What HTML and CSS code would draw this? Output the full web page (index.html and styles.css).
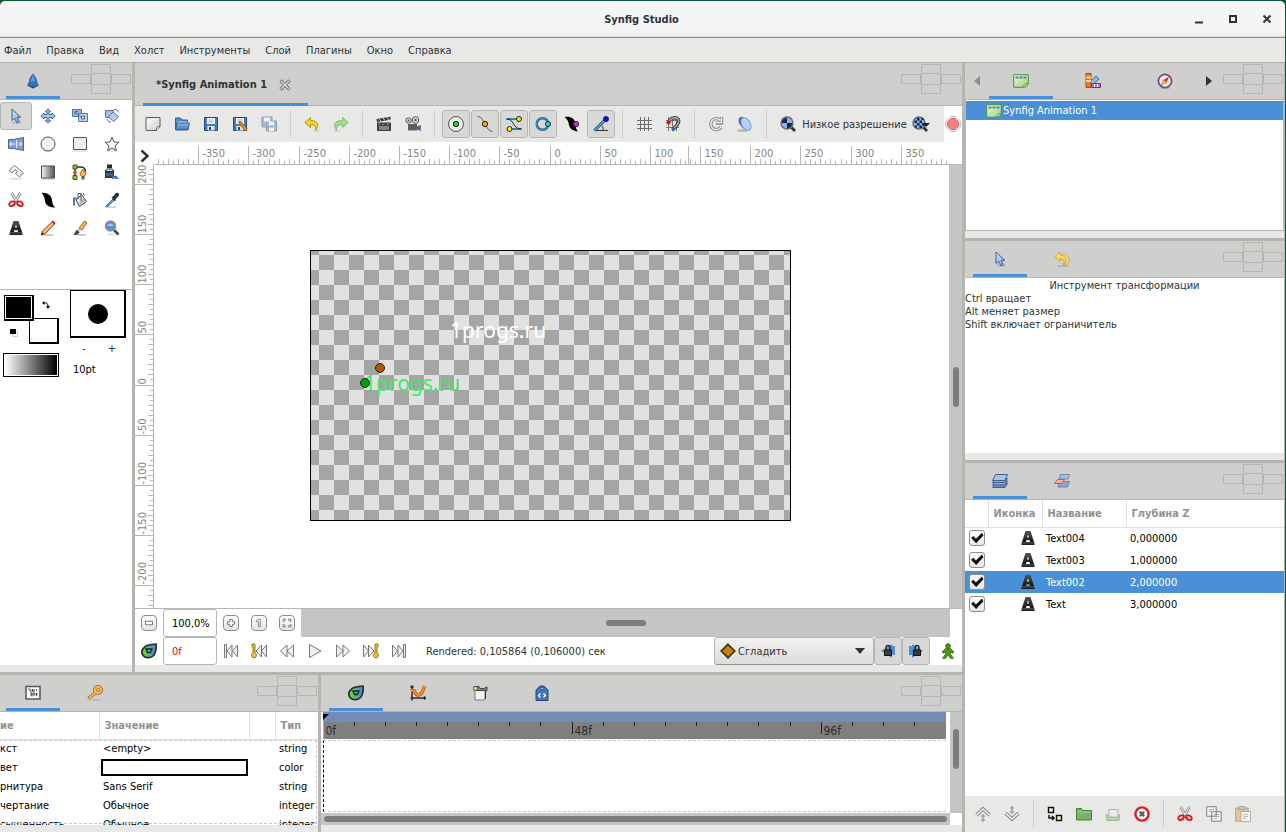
FILE: index.html
```html
<!DOCTYPE html>
<html lang="ru">
<head>
<meta charset="utf-8">
<title>Synfig Studio</title>
<link rel="stylesheet" href="styles.css">
</head>
<body>
<svg class="sprite" aria-hidden="true">
  <defs>
    <linearGradient id="gBlue" x1="0" y1="0" x2="1" y2="1"><stop offset="0" stop-color="#dbe8f8"/><stop offset="1" stop-color="#7d9dcf"/></linearGradient>
    <linearGradient id="gDark" x1="0" y1="0" x2="0" y2="1"><stop offset="0" stop-color="#555"/><stop offset="1" stop-color="#151515"/></linearGradient>
    <linearGradient id="gFade" x1="0" y1="0" x2="1" y2="0"><stop offset="0" stop-color="#f4f4f4"/><stop offset="1" stop-color="#555"/></linearGradient>
    <linearGradient id="gGreen" x1="0" y1="0" x2="1" y2="1"><stop offset="0" stop-color="#e9f8dc"/><stop offset="1" stop-color="#9bd07c"/></linearGradient>
    <linearGradient id="gKite" x1="0" y1="0" x2="1" y2="0"><stop offset="0.2" stop-color="#6fcf3a"/><stop offset="0.9" stop-color="#4d86e0"/></linearGradient>
    <linearGradient id="gPaper" x1="0" y1="0" x2="1" y2="1"><stop offset="0" stop-color="#fff"/><stop offset="1" stop-color="#ccc"/></linearGradient>
    <linearGradient id="gFolder" x1="0" y1="0" x2="0" y2="1"><stop offset="0" stop-color="#8db8e6"/><stop offset="1" stop-color="#3f78bd"/></linearGradient>
  </defs>
  <symbol id="brand" viewBox="0 0 16 16"><path d="M8 .5C10.500 3 12 6 12.300 9L14 13l-3 1-3 1.500L5 14l-3-1 1.700-4C4 6 5.500 3 8 .5z" fill="#4a6580"/><path d="M8 1.500C10 4 11 6.500 11.300 9.500L10 13l-2 1.500L6 13 4.700 9.500C5 6.500 6 4 8 1.500z" fill="#2478cc"/><path d="M8 2c-1.500 3-2 5-2 7l2-1.500L10 9c0-2-.5-4-2-7z" fill="#56a4ee"/><path d="M4.500 13 8 15.500 11.500 13 8 14z" fill="#153c63"/></symbol>
  <symbol id="arrow" viewBox="0 0 16 16"><ellipse cx="9" cy="14.500" rx="5" ry="1.200" fill="#0002"/><path d="M4 1v11.500l2.800-2.300 2 4.600 2.400-1-2-4.500h3.600z" fill="url(#gBlue)" stroke="#3b5f9e"/></symbol>
  <symbol id="move" viewBox="0 0 16 16"><path d="m8 .8 2.700 3H9v2.700h3V5l3.200 3L12 11V9.500H9v3h1.700L8 15.300l-2.700-2.800H7v-3H4V11L.8 8 4 5v1.500h3V3.800H5.300z" fill="#a9c2e6" stroke="#4568a3"/></symbol>
  <symbol id="scale" viewBox="0 0 16 16"><path d="M.5 1.500h9v7h-9z" fill="#9bb5dc" stroke="#5475ab"/><path d="M6.500 5.500h9v8h-9z" fill="#bfd0ea" stroke="#5475ab"/><path d="m3 4 6 5M3 3.500h3M3 3.500v3" fill="none" stroke="#4467a1"/><path d="M9.500 8h3v3h-3z" fill="#d9e4f4" stroke="#4467a1"/></symbol>
  <symbol id="rotate" viewBox="0 0 16 16"><path d="M1.500 2.500h8l-2 7h-6z" fill="#a8bee1" stroke="#5878ac"/><path d="m9 4 5.500 4.500L10 13.500 4.500 9z" fill="#bccde8" stroke="#5878ac"/><path d="M10 1.500c2.500 0 4 1 4.500 3M3 11c.5 2 2 3 4 3" fill="none" stroke="#3f629c"/></symbol>
  <symbol id="mirror" viewBox="0 0 16 16"><path d="M.5 3.500h5l10-2v13l-10-2h-5z" fill="#7e9fd0" stroke="#41659f"/><path d="M8.500 4v8M1.500 8H7m3 0h4M3.500 6 1.500 8l2 2M12 6l2 2-2 2" fill="none" stroke="#e9f0fb"/></symbol>
  <symbol id="circle" viewBox="0 0 16 16"><ellipse cx="8" cy="14.800" rx="5" ry="1" fill="#0002"/><circle cx="8" cy="8" r="7" fill="#f1f1ef" stroke="#555"/></symbol>
  <symbol id="rect" viewBox="0 0 16 16"><path d="M2 15h13" stroke="#0003"/><path d="M1.500 1.500h13v12h-13z" fill="#eeeeec" stroke="#555"/></symbol>
  <symbol id="star" viewBox="0 0 16 16"><ellipse cx="8" cy="14.800" rx="5" ry="1" fill="#0002"/><path d="m8 1.300 2 4.600 5 .5-3.800 3.300 1.200 5L8 12l-4.400 2.700 1.200-5L1 6.400l5-.5z" fill="#f3f3f1" stroke="#555"/></symbol>
  <symbol id="poly" viewBox="0 0 16 16"><ellipse cx="8" cy="14.800" rx="6" ry="1" fill="#0002"/><path d="m1 6.500 5.500-5 9 7.500-4 4L7.500 9.500l2-2L7 5.500l-3 3.500z" fill="#f3f3f1" stroke="#777"/></symbol>
  <symbol id="grad" viewBox="0 0 16 16"><path d="M1.500 2h13v12h-13z" fill="url(#gFade)" stroke="#4c4c4c"/><path d="M2 15.200h13" stroke="#0003"/></symbol>
  <symbol id="spline" viewBox="0 0 16 16"><path d="M3 14V5M3 3h6c3 0 5 2 4 5" fill="none" stroke="#2b2b2b" stroke-width="1.500"/><path d="M1 1h4v4H1zM1 11.500h4v4H1z" fill="#86c232" stroke="#3c6112"/><circle cx="3" cy="8.500" r="2" fill="#e04a2c"/><path d="m11 5 3 4.500-1.500 3h-3L8 9.500z" fill="#f5c04a" stroke="#9a6c14"/><path d="M9.500 12.500h3v3h-3z" fill="#3465a4"/></symbol>
  <symbol id="ink" viewBox="0 0 16 16"><path d="M3 .5h5V4H3zM1 6.500 3 4.500h5l2 2v7.500H1z" fill="#262a30"/><path d="M1.500 8.500h8v4h-8z" fill="#3a5c92"/><path d="M2.500 5.500h6V7h-6z" fill="#ddd"/><path d="M7.500 13c2-2 3.500-.5 5-1.500l1 2 2 1-2.500.5-2.500-.5-2 .8z" fill="#3b78c4"/></symbol>
  <symbol id="scissors" viewBox="0 0 16 16"><path d="M3.500 1 9 10M12.500 1 7 10" stroke="#888" stroke-width="2.800"/><path d="M3.500 1 9 10M12.500 1 7 10" stroke="#e4e4e4" stroke-width="1.300"/><path d="M7.500 10.500C5 8.500 1.500 9.500 1.200 12c0 3 4.800 3 6-1.500M8.500 10.500c2.500-2 6-1 6.300 1.500 0 3-4.800 3-6-1.500" fill="none" stroke="#d61414" stroke-width="1.900"/></symbol>
  <symbol id="width" viewBox="0 0 16 16"><path d="M1.500 1c5-1 10 2 10.500 7 0 3 1 5 3 7.500C9 15.500 5.500 13 5 9 4.500 6 4 3 1.500 1z" fill="#000"/></symbol>
  <symbol id="fill" viewBox="0 0 16 16"><path d="m4 8 5.500-5.500 5 7-7 5z" fill="#e7e7e5" stroke="#444"/><path d="M6 7V1.500h3V9M11 1l1.500 2.500" fill="none" stroke="#555"/><path d="M1 5.500h4.500L3 8v5.500H1z" fill="#4d79b5"/><path d="m7 11 5-5 1.500 2.500-5.500 4z" fill="#aaa"/></symbol>
  <symbol id="eyedrop" viewBox="0 0 16 16"><path d="M3 15.200h9" stroke="#0003" stroke-width="1.500"/><path d="m9 7-6 6-1 2 2-.8L10.500 8" fill="#79a9df" stroke="#355f96"/><path d="m8 5 3.500 3.500M9 6l3-4c1-1.500 3 0 2 1.500l-4 4z" fill="#284267" stroke="#222b38" stroke-width="1.500"/></symbol>
  <symbol id="textA" viewBox="0 0 16 16"><path d="M5.500 1h5L14 12H10l-.5-2h-3L6 12H2z" fill="url(#gDark)"/><path d="m8 4.200 1 3.300H7z" fill="#ededed"/><path d="M1.500 12h13v3h-13z" fill="url(#gDark)"/></symbol>
  <symbol id="pencil" viewBox="0 0 16 16"><path d="M4 15h9" stroke="#0003" stroke-width="2"/><path d="M12.500 1.500 2.500 11l-1.300 4 4-1.200L14.500 4z" fill="#eda95b" stroke="#84502b"/><path d="m4 12 9-9" stroke="#ffe2ae"/><path d="m11.500 2 1.500-1.500L15.700 3l-1.500 1.800z" fill="#d62222"/><path d="m1 15.300 1-3 2 2z" fill="#222"/></symbol>
  <symbol id="brush" viewBox="0 0 16 16"><path d="M5 15h9" stroke="#0003" stroke-width="2"/><path d="m7 8 5.500-7 2.500 1.500L10 10z" fill="#edb34f" stroke="#a8752b"/><path d="m6.500 8 3 2.500-2 1.500L5 9.500z" fill="#ccc"/><path d="M1 14.800c2-.5 1.500-3.300 4-5l2.500 2.400c-1 2.300-3 3.300-6.500 2.600z" fill="#404d3e"/></symbol>
  <symbol id="zoomer" viewBox="0 0 16 16"><path d="M4 14.500h9" stroke="#0002" stroke-width="2"/><path d="m10 10 4.500 4.500" stroke="#444" stroke-width="2.500"/><circle cx="6.500" cy="6" r="5" fill="#5d8fcd" stroke="#8a8f95" stroke-width="1.500"/><path d="M3 6c2-3.500 5-3.500 7 0z" fill="#a8cbf1"/></symbol>
  <symbol id="docNew" viewBox="0 0 16 16"><path d="M1 1.500h14V11l-4 3.500H1z" fill="url(#gPaper)" stroke="#5b5b5b"/><path d="M15 10.500c-2 0-3.500 0-3.500 4" fill="#fff" stroke="#5b5b5b"/></symbol>
  <symbol id="folder" viewBox="0 0 16 16"><path d="M1.500 13V2h5l1.500 2h5.500v5" fill="#5389c8" stroke="#2f5f9c"/><path d="M3.500 5.500h10V10h-10z" fill="#c5daf1"/><path d="M1.500 14 3 7h12.500L14 14z" fill="url(#gFolder)" stroke="#2f5f9c"/></symbol>
  <symbol id="save" viewBox="0 0 16 16"><path d="M1.500 1.500h13v13h-13z" fill="#4a7cba" stroke="#24497b"/><path d="M4 2h8v6H4z" fill="#f4f6f9"/><path d="M5.500 4h5M5.500 6h5" stroke="#9db8da"/><path d="M4.500 10h7v4.500h-7z" fill="#dfe6e6"/><path d="M6 11h2v3H6z" fill="#28487a"/></symbol>
  <symbol id="saveAs" viewBox="0 0 16 16"><use href="#save"/><path d="m6.500 6 2-.5 6.500 7-2 2.500z" fill="#f58a1f" stroke="#b4560a"/></symbol>
  <symbol id="saveAll" viewBox="0 0 16 16"><g opacity=".5"><path d="M1 1h10v10H1zM5.500 5h10v10h-10z" fill="#6b93c5" stroke="#31578c"/><path d="M3 1.500h6v4H3zM8 5.500h5v4H8zM8 11.500h5V15H8z" fill="#fff"/></g></symbol>
  <symbol id="undo" viewBox="0 0 16 16"><path d="M10 14.800h5" stroke="#0002" stroke-width="1.500"/><path d="M6.500 1.500.8 6.500l5.700 5V8.700c4-.2 5.500 1 5 5.300C15 11 15.500 4.500 6.500 4.500z" fill="#f3d12f" stroke="#b99508"/></symbol>
  <symbol id="redo" viewBox="0 0 16 16"><path d="M1 14.800h6" stroke="#0002" stroke-width="1.500"/><path d="m9.500 1.500 5.700 5-5.700 5V8.700c-4-.2-6 1-6 5.300C.5 11 0 4.500 9.500 4.500z" fill="#a5d993" stroke="#7fbc68"/></symbol>
  <symbol id="clap" viewBox="0 0 16 16"><path d="M1 6.500h14V15H1zM.5 3 14.500.8v3L1 6z" fill="#3c3f3e"/><path d="m3 3 2 2m2-3 2 2.500m2-3 2 2.500M2.500 9 4 7.500M6.500 9 8 7.500m3 1.500 1.500-1.500M3 11h10M3 13h10" stroke="#c9cbc9"/></symbol>
  <symbol id="camera" viewBox="0 0 16 16"><circle cx="3.500" cy="4.500" r="2.700" fill="#ddd" stroke="#555"/><circle cx="10.500" cy="4" r="3.300" fill="#ddd" stroke="#555"/><circle cx="3.500" cy="4.500" r="1" fill="#555"/><circle cx="10.500" cy="4" r="1.200" fill="#555"/><path d="M3 8h9v6.500H3z" fill="#5d5f5e"/><path d="M12 10.500 15.800 9v6L12 13.500z" fill="#4a6794"/></symbol>
  <symbol id="hPos" viewBox="0 0 16 16"><circle cx="8" cy="8" r="7.400" fill="#fff" stroke="#444"/><circle cx="8" cy="8" r="5" fill="none" stroke="#ddd"/><circle cx="8" cy="8" r="2.700" fill="#18e618" stroke="#111"/></symbol>
  <symbol id="hVert" viewBox="0 0 16 16"><path d="M.5 .5C6 1 6 6 8 8s2 6.500 7.500 7.500" fill="none" stroke="#555"/><circle cx="8" cy="8" r="2.700" fill="#f7a707" stroke="#222"/></symbol>
  <symbol id="hTan" viewBox="0 0 16 16"><path d="M.5 3H12M4 13h11.500" stroke="#3584b4" stroke-width="2"/><path d="M.5 3C9 3 6 13 15.500 13" fill="none" stroke="#222"/><circle cx="13" cy="3" r="2.500" fill="#fcec0c" stroke="#222"/><circle cx="3.500" cy="13" r="2.500" fill="#fcec0c" stroke="#222"/></symbol>
  <symbol id="hRad" viewBox="0 0 16 16"><circle cx="7.500" cy="8" r="5.800" fill="none" stroke="#195e86" stroke-width="2.400"/><circle cx="7.500" cy="8" r="5.800" fill="none" stroke="#4aa0d0"/><circle cx="13" cy="8" r="2.500" fill="#16dff5" stroke="#222"/></symbol>
  <symbol id="hWid" viewBox="0 0 16 16"><path d="M.5 1C6 0 11 2 11.500 8c0 3 .5 5 2.500 7.500C9 15 6 13 5 9 4.500 5 3 3 .5 1z" fill="#000"/><circle cx="12" cy="8" r="2.600" fill="#f518e3" stroke="#222"/></symbol>
  <symbol id="hAng" viewBox="0 0 16 16"><path d="M1.500 14.500H15M7.500 8.500c2 1 3 3 2.500 6" fill="none" stroke="#333"/><path d="M1.500 14.500 13 3" stroke="#174c70" stroke-width="3"/><path d="M1.500 14.500 13 3" stroke="#60a9d6" stroke-width="1.400"/><circle cx="13" cy="3" r="2.500" fill="#1014e8" stroke="#111a66"/></symbol>
  <symbol id="grid" viewBox="0 0 16 16"><path d="M4.500 1v14M8.500 1v14M12.500 1v14M1 4.500h15M1 8.500h15M1 12.500h15" stroke="#6c6e6d"/></symbol>
  <symbol id="snap" viewBox="0 0 16 16"><path d="M3.500 1v14M7.500 1v14M11.500 1v14M1 4.500h13M1 11.500h13" stroke="#777"/><path d="M3 7c3-6 8-6 10-4 2 3 0 6-5 10" fill="none" stroke="#444" stroke-width="3.400"/><path d="M3 7c3-6 8-6 10-4 2 3 0 6-5 10" fill="none" stroke="#aaa" stroke-width="1.400"/><path d="m1 7 2.500-3L6 6.500 3.500 9z" fill="#d91111"/><path d="m8 11 2.500 2-2 2.500L6 13z" fill="#2f65b0"/></symbol>
  <symbol id="refresh" viewBox="0 0 16 16"><path d="M12.500 4.500A5.500 5.500 0 1 0 13 11M13.500 1v6H8" fill="none" stroke="#8d8d8d" stroke-width="3.400"/><path d="M12.500 4.500A5.500 5.500 0 1 0 13 11M13.500 1.500v5h-5" fill="none" stroke="#eee" stroke-width="1.400"/></symbol>
  <symbol id="onion" viewBox="0 0 16 16"><ellipse cx="5.500" cy="14.500" rx="5" ry="1.500" fill="#0003"/><ellipse cx="6.500" cy="7" rx="4" ry="6.800" transform="rotate(-32 6.500 7)" fill="#3c6fb0"/><ellipse cx="9" cy="8" rx="4.300" ry="6.800" transform="rotate(-32 9 8)" fill="#b7d0ee" stroke="#7f9fc9"/></symbol>
  <symbol id="resLow" viewBox="0 0 16 16"><path d="m11 11 4 4" stroke="#333" stroke-width="2.800"/><circle cx="7" cy="7" r="6" fill="#8db2e2" stroke="#667" stroke-width="1.400"/><path d="M7 1.800A5.200 5.200 0 0 0 1.800 7H7zM7 7v5.200A5.200 5.200 0 0 0 12.200 7z" fill="#10264a"/></symbol>
  <symbol id="resHigh" viewBox="0 0 18 16"><path d="m11 11 4 4" stroke="#333" stroke-width="2.800"/><circle cx="7" cy="7" r="6" fill="#8db2e2" stroke="#667" stroke-width="1.400"/><path d="M2.500 4.500H5V7H2.500zM5 2h2.500v2.500H5zM7.500 4.500H10V7H7.500zM5 7h2.500v2.500H5zM10 7h2.500v2.500H10zM7.500 9.500H10V12H7.500zM3 9.500h2v2H3zM9.500 2h2v2h-2z" fill="#10264a"/><path d="M10 7h8l-4 4z" fill="#222"/></symbol>
  <symbol id="stop" viewBox="0 0 16 16"><path d="M5 .7h6L15.300 5v6L11 15.300H5L.7 11V5z" fill="#fff" stroke="#bcbcbc"/><path d="M5.800 2.500h4.400l3.300 3.300v4.400l-3.300 3.300H5.800l-3.300-3.300V5.800z" fill="#ef8080" stroke="#e26565"/></symbol>
  <symbol id="sheet" viewBox="0 0 16 16"><path d="M.7 1.700h14.600V10c-.5 2.500-2 4.300-5 4.300H.7z" fill="url(#gGreen)" stroke="#4f8f33"/><path d="M2.500 3.500h3v2h-3zM6.500 3.500h3v2h-3zM10.500 3.500h3v2h-3z" class="holes"/><path d="M14.500 10.500c-2 0-3.500 1-4 3.500" fill="#f3fbee" stroke="#4f8f33"/></symbol>
  <symbol id="palette" viewBox="0 0 16 16"><path d="M1 .5h5v14H1z" fill="#ef7d1c" stroke="#a94c07"/><path d="M1 4.500h5M1 8h5" stroke="#fff" stroke-width="1.500"/><path d="m7 7 4-4 3 3-6 6" fill="#8db6e4" stroke="#3a6aa7"/><path d="M6.500 10.500h9v4h-9z" fill="#a779b4" stroke="#6c3f7a"/><path d="M9.500 11v3m3-3v3" stroke="#fff"/></symbol>
  <symbol id="compass" viewBox="0 0 16 16"><ellipse cx="8" cy="15" rx="5" ry="1" fill="#0002"/><circle cx="8" cy="8" r="6.600" fill="#efe9ef" stroke="#7d4b83" stroke-width="1.800"/><path d="m12 3.500-2.300 6L6.500 7z" fill="#e22"/><path d="m4 12.500 2.500-5.500 3.200 2.500z" fill="#e9c93a" stroke="#8a731e" stroke-width=".5"/></symbol>
  <symbol id="history" viewBox="0 0 16 16"><ellipse cx="9" cy="15" rx="6" ry="1" fill="#0002"/><path d="M8 3c7-1 9 7 5 11h-3c3-3 2-6-2-6" fill="#e8d89c" stroke="#cbb35e"/><path d="M6 1 .8 5.500 6 10V7.500c4 0 5 3 3 6.500 5-3 3.500-10-3-10z" fill="#f6dd62" stroke="#d0ac24"/></symbol>
  <symbol id="layers" viewBox="0 0 16 16"><g stroke="#40618f"><path d="M3.500 10.500h12L13 14.500H.5z" fill="#6f93c5"/><path d="M3.500 8h12L13 12H.5z" fill="#8daad3"/><path d="M3.500 5.500h12L13 9.500H.5z" fill="#8daad3"/><path d="M3.500 1.500h12l-2.500 6H.5z" fill="#abc3e4"/></g></symbol>
  <symbol id="layerSet" viewBox="0 0 16 16"><g stroke="#7089ad"><path d="M5.500 8.500h10l-2 5.500H4z" fill="#8ba8d0"/><path d="M6.500 1.500h9L14 6H5z" fill="#a5bfdf"/><path d="M3.500 6.500h7L8 10.500H.5z" fill="#f7b29b" stroke="#cb5a3c"/></g></symbol>
  <symbol id="up" viewBox="0 0 16 16"><path d="m1.500 9 6.500-6 6.500 6" fill="none" stroke="#888" stroke-width="3.600"/><path d="m1.500 9 6.500-6 6.500 6" fill="none" stroke="#f3f3f3" stroke-width="1.600"/><circle cx="8" cy="10" r="1.200" fill="#fff" stroke="#777"/><circle cx="8" cy="14" r="1.200" fill="#fff" stroke="#777"/></symbol>
  <symbol id="down" viewBox="0 0 16 16"><path d="m1.500 7 6.500 6 6.500-6" fill="none" stroke="#888" stroke-width="3.600"/><path d="m1.500 7 6.500 6 6.500-6" fill="none" stroke="#f3f3f3" stroke-width="1.600"/><circle cx="8" cy="6" r="1.200" fill="#fff" stroke="#777"/><circle cx="8" cy="2" r="1.200" fill="#fff" stroke="#777"/></symbol>
  <symbol id="dup" viewBox="0 0 16 16"><path d="M1.500 1.500h5v5h-5zM9.500 9.500h5v5h-5z" fill="#fbe8b6" stroke="#111" stroke-width="1.400"/><path d="M2 9v3h4M5 10l2 2-2 2" fill="none" stroke="#111" stroke-width="1.500"/></symbol>
  <symbol id="gfolder" viewBox="0 0 16 16"><path d="M.5 14V2.500h5L7 4.500h8.500V14z" fill="#79b36a" stroke="#478038"/><path d="M1 6h14" stroke="#a5d198"/></symbol>
  <symbol id="gopen" viewBox="0 0 16 16"><g opacity=".65"><path d="M1 9h3v2h8V9h3l-1 5.500H2z" fill="#9ac590" stroke="#72a265"/><path d="M4 3.500h9v7.500H4z" fill="#eee" stroke="#999"/></g></symbol>
  <symbol id="del" viewBox="0 0 16 16"><circle cx="8" cy="8" r="6.600" fill="#fff" stroke="#df1c1c" stroke-width="2.400"/><path d="m5.800 5.800 4.400 4.400m0-4.400-4.400 4.400" stroke="#555" stroke-width="2.200"/></symbol>
  <symbol id="copy" viewBox="0 0 16 16"><path d="M.7.700h9.500v9.500H.7zM5.700 5.700h9.500v9.500H5.700z" fill="#f5f5f3" stroke="#7d7f7c"/><path d="M3 3.500h5M3 5.500h2M8 8.500h5M8 10.500h5M8 12.500h3" stroke="#aaa"/></symbol>
  <symbol id="paste" viewBox="0 0 16 16"><g opacity=".7"><path d="M.7 2h12.500v13.300H.7z" fill="#dcb97c" stroke="#a98645"/><path d="M4 .5h6v3H4z" fill="#bbb" stroke="#888"/><path d="M6 5.500h9.500v10H6z" fill="#fafafa" stroke="#999"/><path d="M8 8.500h5M8 10.500h5M8 12.500h3" stroke="#aaa"/></g></symbol>
  <symbol id="kite" viewBox="0 0 16 16"><path d="M15 1c.5 4 0 8-2 11-2 2.500-6 3.500-9 2S0 9 1.500 6.500 5 2.500 8 2s5-1 7-1z" fill="url(#gKite)" stroke="#243322" stroke-width="1.700"/><path d="M5 6h6L9.500 9.500h-3z" fill="none" stroke="#15232b" stroke-width="1.300"/></symbol>
  <symbol id="params" viewBox="0 0 16 16"><path d="M1 1.500h14v12.500H1z" fill="#fdfdfd" stroke="#555" stroke-width="1.500"/><path d="M3 4h2v2h1v5M7.500 4v3M7 8v3.500M9 4.500v6.500M11.500 4v2m0 2v3M6.500 5h3M6 9h7" fill="none" stroke="#555"/></symbol>
  <symbol id="key" viewBox="0 0 16 16"><ellipse cx="9" cy="15" rx="5" ry=".8" fill="#0002"/><circle cx="11" cy="5" r="3" fill="none" stroke="#a0691c" stroke-width="4"/><path d="m9 7-7.500 6.500" stroke="#a0691c" stroke-width="3.400"/><circle cx="11" cy="5" r="3" fill="none" stroke="#f0b355" stroke-width="2.600"/><path d="m9 7-7 6m2 0 1 1" stroke="#f0b355" stroke-width="2"/></symbol>
  <symbol id="curve" viewBox="0 0 16 16"><path d="M2 1v14.500M.5 13h15M.5 2.500 2 1l1.500 1.500M14 11.500l1.500 1.500-1.500 1.500" fill="none" stroke="#2b2b2b" stroke-width="1.500"/><path d="M1 6c5-3 3 5 8 4 4-1 4-5 5.500-9" fill="none" stroke="#cd4a06" stroke-width="3.300"/><path d="M1 6c5-3 3 5 8 4 4-1 4-5 5.500-9" fill="none" stroke="#f9a12c" stroke-width="1.500"/></symbol>
  <symbol id="library" viewBox="0 0 16 16"><path d="M3 5.500h10V14l-1.500 1H3z" fill="#f4f4f2" stroke="#777"/><path d="M2 1.500h5l1 2h4l3-1.500v3.500H2z" fill="#6f9f5b" stroke="#444"/><circle cx="3.500" cy="3.500" r="2" fill="#ece2b2" stroke="#555"/><path d="M13.500 5v9" stroke="#333"/></symbol>
  <symbol id="tag" viewBox="0 0 16 16"><path d="M2 15.500V5l4-4h4l4 4v10.500z" fill="#4273b6" stroke="#204a86"/><circle cx="8" cy="3.500" r="1.300" fill="#dbe7f5" stroke="#204a86"/><path d="M6.500 8.500 4.500 10.500l2 2m3-4 2 2-2 2" fill="none" stroke="#fff" stroke-width="1.300"/></symbol>
  <symbol id="zout" viewBox="0 0 16 16"><path d="M4 6h8v4H4z" fill="#fff" stroke="#666"/></symbol>
  <symbol id="zin" viewBox="0 0 16 16"><path d="M6.500 4h3v2.500H12v3H9.500V12h-3V9.500H4v-3h2.500z" fill="#fff" stroke="#666"/></symbol>
  <symbol id="zone" viewBox="0 0 16 16"><path d="M5 6.500V5l2-1h2.500v8h-2V6.500z" fill="#fff" stroke="#777"/></symbol>
  <symbol id="zfit" viewBox="0 0 16 16"><path d="M3.500 6V3.500H6V5L5 6zM12.500 6V3.500H10V5l1 1zM3.500 10v2.500H6V11l-1-1zM12.500 10v2.500H10V11l1-1z" fill="#fff" stroke="#666"/></symbol>
  <symbol id="tFirst" viewBox="0 0 16 16"><g fill="#f1f1f1" stroke="#777"><path d="M1.500 1.500h2v13h-2zM9 2v12L4 8zM14.500 2v12l-5-6z"/></g></symbol>
  <symbol id="tPrevKey" viewBox="0 0 16 16"><g fill="#f1f1f1" stroke="#777"><path d="M10.500 2v12L5 8zM15.500 2v12l-5-6z"/></g><path d="M1 1h3v9a2.500 2.500 0 1 1-2 0V4H1z" fill="#f1c232" stroke="#9a7612"/></symbol>
  <symbol id="tPrev" viewBox="0 0 16 16"><path d="M8 2v12L1.500 8zM14.500 2v12L8 8z" fill="#f1f1f1" stroke="#777"/></symbol>
  <symbol id="tPlay" viewBox="0 0 16 16"><path d="M2.500 1.500v13L14 8z" fill="#f1f1f1" stroke="#777"/></symbol>
  <symbol id="tNext" viewBox="0 0 16 16"><path d="M1.500 2v12L8 8zM8 2v12l6.500-6z" fill="#f1f1f1" stroke="#777"/></symbol>
  <symbol id="tNextKey" viewBox="0 0 16 16"><g transform="matrix(-1 0 0 1 16 0)"><g fill="#f1f1f1" stroke="#777"><path d="M10.500 2v12L5 8zM15.500 2v12l-5-6z"/></g><path d="M1 1h3v9a2.500 2.500 0 1 1-2 0V4H1z" fill="#f1c232" stroke="#9a7612"/></g></symbol>
  <symbol id="tLast" viewBox="0 0 16 16"><g fill="#f1f1f1" stroke="#777"><path d="M14.500 1.500h-2v13h2zM7 2v12l5-6zM1.500 2v12l5-6z"/></g></symbol>
  <symbol id="diamond" viewBox="0 0 16 16"><path d="M8 1.200 14.800 8 8 14.800 1.200 8z" fill="#c77f08" stroke="#3b2d14" stroke-width="1.600"/></symbol>
  <symbol id="lockL" viewBox="0 0 16 16"><path d="M12 1v14L1 8z" fill="#4f8fd6"/><path d="M12 3h3v9h-3z" fill="#4f8fd6"/><path d="M4.500 7h7v5.500h-7z" fill="#3a3a3a" stroke="#111"/><path d="M6 7V4c.5-2 3.500-2 4 0v3" fill="none" stroke="#222" stroke-width="1.400"/></symbol>
  <symbol id="lockR" viewBox="0 0 16 16"><path d="M4 1v14l11-7z" fill="#4f8fd6"/><path d="M1 3h3v9H1z" fill="#4f8fd6"/><path d="M5.500 7h7v5.500h-7z" fill="#3a3a3a" stroke="#111"/><path d="M7 7V4c.5-2 3.500-2 4 0v3" fill="none" stroke="#222" stroke-width="1.400"/></symbol>
  <symbol id="man" viewBox="0 0 16 16"><circle cx="8" cy="3" r="2.300" fill="#4c9a12" stroke="#2c6a05"/><path d="M5.500 5.500h5L14 9l-1 1.200L10.500 9v2l3 4.500h-3L8 12l-2.500 3.500h-3l3-4.500V9L3 10.200 2 9z" fill="#4c9a12" stroke="#2c6a05" stroke-width=".7"/></symbol>
  <symbol id="cross" viewBox="0 0 60 30"><path d="M20.500.5h19v9h-19zM.5 10.500h19v9H.5zM40.500 10.500h19v9h-19zM20.500 20.500h19v9h-19zM20.500 9.500v11M39.500 9.500v11" fill="none" stroke="#b6b6b3"/></symbol>
</svg>

<div class="window">
  <header class="titlebar">
    <h1>Synfig Studio</h1>
    <div class="winctl">
      <button aria-label="Свернуть"><svg viewBox="0 0 10 10"><path d="M1 8.500h8" stroke="#2e3436" stroke-width="2"/></svg></button>
      <button aria-label="Развернуть"><svg viewBox="0 0 10 10"><path d="M2 2h6v6H2z" fill="none" stroke="#2e3436" stroke-width="2"/></svg></button>
      <button aria-label="Закрыть"><svg viewBox="0 0 10 10"><path d="m1.500 1.500 7 7m0-7-7 7" stroke="#2e3436" stroke-width="2"/></svg></button>
    </div>
  </header>
  <nav class="menubar">
    <button>Файл</button><button>Правка</button><button>Вид</button><button>Холст</button><button>Инструменты</button><button>Слой</button><button>Плагины</button><button>Окно</button><button>Справка</button>
  </nav>

  <main class="panes">
    <div class="left">
      <div class="upper">
        <section class="panel toolbox">
          <div class="tabs near">
            <button class="tab on" aria-label="Инструменты"><svg class="i"><use href="#brand"/></svg></button>
            <svg class="cross"><use href="#cross"/></svg>
          </div>
          <div class="tools">
            <button class="on" aria-label="Трансформация"><svg class="i"><use href="#arrow"/></svg></button>
            <button aria-label="Плавное перемещение"><svg class="i"><use href="#move"/></svg></button>
            <button aria-label="Масштаб"><svg class="i"><use href="#scale"/></svg></button>
            <button aria-label="Вращение"><svg class="i"><use href="#rotate"/></svg></button>
            <button aria-label="Отражение"><svg class="i"><use href="#mirror"/></svg></button>
            <button aria-label="Окружность"><svg class="i"><use href="#circle"/></svg></button>
            <button aria-label="Прямоугольник"><svg class="i"><use href="#rect"/></svg></button>
            <button aria-label="Звезда"><svg class="i"><use href="#star"/></svg></button>
            <button aria-label="Многоугольник"><svg class="i"><use href="#poly"/></svg></button>
            <button aria-label="Градиент"><svg class="i"><use href="#grad"/></svg></button>
            <button aria-label="Сплайн"><svg class="i"><use href="#spline"/></svg></button>
            <button aria-label="Рисование"><svg class="i"><use href="#ink"/></svg></button>
            <button aria-label="Вырезание"><svg class="i"><use href="#scissors"/></svg></button>
            <button aria-label="Ширина"><svg class="i"><use href="#width"/></svg></button>
            <button aria-label="Заливка"><svg class="i"><use href="#fill"/></svg></button>
            <button aria-label="Пипетка"><svg class="i"><use href="#eyedrop"/></svg></button>
            <button aria-label="Текст"><svg class="i"><use href="#textA"/></svg></button>
            <button aria-label="Набросок"><svg class="i"><use href="#pencil"/></svg></button>
            <button aria-label="Кисть"><svg class="i"><use href="#brush"/></svg></button>
            <button aria-label="Масштаб вида"><svg class="i"><use href="#zoomer"/></svg></button>
          </div>
          <div class="defaults">
            <div class="inks">
              <div class="swatches">
                <button class="swatch back" aria-label="Цвет заливки"></button>
                <button class="swatch fore" aria-label="Цвет контура"></button>
                <button class="swap" aria-label="Поменять цвета"><svg viewBox="0 0 8 8"><path d="M1 2h2.500c2 0 2.500 1 2.500 4" fill="none" stroke="#000"/><path d="M2.500 0v4L0 2zM4 5h4L6 8z"/></svg></button>
                <button class="reset" aria-label="Цвета по умолчанию"><svg viewBox="0 0 8 8"><path d="M3 3h4.500v4.500H3z" fill="#fff" stroke="#ccc"/><path d="M0 0h6v5H0z"/></svg></button>
              </div>
              <button class="gradient" aria-label="Градиент по умолчанию"></button>
            </div>
            <div class="pen">
              <button class="pensize" aria-label="Толщина кисти"><span></span></button>
              <div class="steps"><button>-</button><button>+</button></div>
              <button class="points">10pt</button>
            </div>
          </div>
        </section>

        <section class="panel canvaspanel">
          <div class="tabs tall">
            <button class="tab doc on">*Synfig Animation 1<svg class="x" viewBox="0 0 12 12"><path d="m1.500 1.500 9 9m0-9-9 9" stroke="#777" stroke-width="3.400"/><path d="m2 2 8 8m0-8-8 8" stroke="#ddd" stroke-width="1.400"/></svg></button>
            <svg class="cross"><use href="#cross"/></svg>
          </div>
          <div class="barrow">
            <div class="toolbar">
              <button aria-label="Создать"><svg class="i"><use href="#docNew"/></svg></button>
              <button aria-label="Открыть"><svg class="i"><use href="#folder"/></svg></button>
              <button aria-label="Сохранить"><svg class="i"><use href="#save"/></svg></button>
              <button aria-label="Сохранить как"><svg class="i"><use href="#saveAs"/></svg></button>
              <button aria-label="Сохранить все"><svg class="i"><use href="#saveAll"/></svg></button>
              <span class="sep"></span>
              <button aria-label="Отменить"><svg class="i"><use href="#undo"/></svg></button>
              <button aria-label="Повторить"><svg class="i"><use href="#redo"/></svg></button>
              <span class="sep"></span>
              <button aria-label="Рендеринг"><svg class="i"><use href="#clap"/></svg></button>
              <button aria-label="Предпросмотр"><svg class="i"><use href="#camera"/></svg></button>
              <span class="sep"></span>
              <button class="on" aria-label="Маркеры положения"><svg class="i"><use href="#hPos"/></svg></button>
              <button class="on" aria-label="Маркеры вершин"><svg class="i"><use href="#hVert"/></svg></button>
              <button class="on" aria-label="Маркеры касательных"><svg class="i"><use href="#hTan"/></svg></button>
              <button class="on" aria-label="Маркеры радиуса"><svg class="i"><use href="#hRad"/></svg></button>
              <button aria-label="Маркеры ширины"><svg class="i"><use href="#hWid"/></svg></button>
              <button class="on" aria-label="Маркеры угла"><svg class="i"><use href="#hAng"/></svg></button>
              <span class="sep"></span>
              <button aria-label="Сетка"><svg class="i"><use href="#grid"/></svg></button>
              <button aria-label="Привязка к сетке"><svg class="i"><use href="#snap"/></svg></button>
              <span class="sep"></span>
              <button aria-label="Обновить"><svg class="i"><use href="#refresh"/></svg></button>
              <button aria-label="Калька"><svg class="i"><use href="#onion"/></svg></button>
              <span class="sep"></span>
              <button aria-label="Уменьшить разрешение"><svg class="i"><use href="#resLow"/></svg></button>
              <button class="wide">Низкое разрешение</button>
              <button aria-label="Увеличить разрешение"><svg class="i w18"><use href="#resHigh"/></svg></button>
            </div>
            <button class="stop" aria-label="Остановить"><svg class="i"><use href="#stop"/></svg></button>
          </div>
          <div class="stage">
            <button class="corner" aria-label="Меню холста"><svg viewBox="0 0 10 14"><path d="m1.500 1.500 6 5.500-6 5.500" fill="none" stroke="#2e3436" stroke-width="2.400"/></svg></button>
            <svg class="hruler" id="hruler"></svg>
            <svg class="vruler" id="vruler"></svg>
            <div class="work">
              <div class="artboard">
                <span class="art white">1progs.ru</span>
                <span class="art green">1progs.ru</span>
                <span class="handle size"></span>
                <span class="handle origin"></span>
              </div>
            </div>
            <div class="vscroll"><span></span></div>
          </div>
          <div class="zoomrow">
            <button class="boxed" aria-label="Уменьшить"><svg class="i"><use href="#zout"/></svg></button>
            <input type="text" value="100,0%" aria-label="Масштаб">
            <button class="boxed" aria-label="Увеличить"><svg class="i"><use href="#zin"/></svg></button>
            <button class="boxed" aria-label="Масштаб 100%"><svg class="i"><use href="#zone"/></svg></button>
            <button class="boxed" aria-label="Вписать"><svg class="i"><use href="#zfit"/></svg></button>
            <div class="hscroll"><span></span></div>
          </div>
          <div class="timerow">
            <button aria-label="Время"><svg class="i"><use href="#kite"/></svg></button>
            <input class="red" type="text" value="0f" aria-label="Текущее время">
            <button aria-label="В начало"><svg class="i"><use href="#tFirst"/></svg></button>
            <button aria-label="К предыдущему ключу"><svg class="i"><use href="#tPrevKey"/></svg></button>
            <button aria-label="Предыдущий кадр"><svg class="i"><use href="#tPrev"/></svg></button>
            <button aria-label="Воспроизвести"><svg class="i"><use href="#tPlay"/></svg></button>
            <button aria-label="Следующий кадр"><svg class="i"><use href="#tNext"/></svg></button>
            <button aria-label="К следующему ключу"><svg class="i"><use href="#tNextKey"/></svg></button>
            <button aria-label="В конец"><svg class="i"><use href="#tLast"/></svg></button>
            <span class="status">Rendered: 0,105864 (0,106000) сек</span>
            <div class="combo">
              <svg class="i"><use href="#diamond"/></svg>
              <select aria-label="Интерполяция"><option>Сгладить</option></select>
              <svg class="caret" viewBox="0 0 10 6"><path d="M0 0h10L5 6z" fill="#2e3436"/></svg>
            </div>
            <button class="on" aria-label="Блокировать прошлые ключи"><svg class="i"><use href="#lockL"/></svg></button>
            <button class="on" aria-label="Блокировать будущие ключи"><svg class="i"><use href="#lockR"/></svg></button>
            <button class="animate" aria-label="Режим анимации"><svg class="i"><use href="#man"/></svg></button>
          </div>
        </section>
      </div>

      <div class="lower">
        <section class="panel params">
          <div class="tabs near">
            <button class="tab on" aria-label="Параметры"><svg class="i"><use href="#params"/></svg></button>
            <button class="tab" aria-label="Ключевые кадры"><svg class="i"><use href="#key"/></svg></button>
            <svg class="cross"><use href="#cross"/></svg>
          </div>
          <div class="scrollclip">
            <table class="ptable">
              <colgroup><col class="c1"><col class="c2"><col class="c3"><col></colgroup>
              <thead><tr><th>ие</th><th>Значение</th><th></th><th>Тип</th></tr></thead>
              <tbody>
                <tr><td>кст</td><td>&lt;empty&gt;</td><td></td><td>string</td></tr>
                <tr><td>вет</td><td><button class="colorcell" aria-label="Цвет"></button></td><td></td><td>color</td></tr>
                <tr><td>рнитура</td><td>Sans Serif</td><td></td><td>string</td></tr>
                <tr><td>чертание</td><td>Обычное</td><td></td><td>integer</td></tr>
                <tr><td>сыщенность</td><td>Обычное</td><td></td><td>integer</td></tr>
              </tbody>
            </table>
          </div>
        </section>
        <section class="panel timetrack">
          <div class="tabs">
            <button class="tab on" aria-label="Временная шкала"><svg class="i"><use href="#kite"/></svg></button>
            <button class="tab" aria-label="Графики"><svg class="i"><use href="#curve"/></svg></button>
            <button class="tab" aria-label="Библиотека"><svg class="i"><use href="#library"/></svg></button>
            <button class="tab" aria-label="Метаданные"><svg class="i"><use href="#tag"/></svg></button>
            <svg class="cross"><use href="#cross"/></svg>
          </div>
          <div class="trackgrid">
            <div class="trackarea">
              <svg class="timeline" id="timeline"></svg>
              <div class="track"></div>
            </div>
            <div class="vscroll"><span></span></div>
            <div class="hscroll full"><span></span></div>
          </div>
        </section>
      </div>
    </div>

    <aside class="right">
      <section class="panel browser">
        <div class="tabs scrolled">
          <button class="nudge" aria-label="Назад"><svg viewBox="0 0 6 10"><path d="M6 0v10L0 5z" fill="#8b8e8f"/></svg></button>
          <button class="tab on" aria-label="Холсты"><svg class="i"><use href="#sheet"/></svg></button>
          <button class="tab" aria-label="Палитра"><svg class="i"><use href="#palette"/></svg></button>
          <button class="tab" aria-label="Навигатор"><svg class="i"><use href="#compass"/></svg></button>
          <button class="nudge" aria-label="Вперёд"><svg viewBox="0 0 6 10"><path d="M0 0v10l6-5z" fill="#2e3436"/></svg></button>
          <svg class="cross"><use href="#cross"/></svg>
        </div>
        <ul class="tree"><li><svg class="i"><use href="#sheet"/></svg>Synfig Animation 1</li></ul>
      </section>
      <section class="panel options">
        <div class="tabs">
          <button class="tab on" aria-label="Параметры инструмента"><svg class="i"><use href="#arrow"/></svg></button>
          <button class="tab" aria-label="История"><svg class="i"><use href="#history"/></svg></button>
          <svg class="cross"><use href="#cross"/></svg>
        </div>
        <div class="hints">
          <p class="mid">Инструмент трансформации</p>
          <p>Ctrl вращает</p>
          <p>Alt меняет размер</p>
          <p>Shift включает ограничитель</p>
        </div>
      </section>
      <section class="panel layers">
        <div class="tabs">
          <button class="tab on" aria-label="Слои"><svg class="i"><use href="#layers"/></svg></button>
          <button class="tab" aria-label="Наборы"><svg class="i"><use href="#layerSet"/></svg></button>
          <svg class="cross"><use href="#cross"/></svg>
        </div>
        <div class="layerlist">
          <table class="ltable">
            <colgroup><col class="l1"><col class="l2"><col class="l3"><col></colgroup>
            <thead><tr><th></th><th>Иконка</th><th>Название</th><th>Глубина Z</th></tr></thead>
            <tbody>
              <tr><td><input type="checkbox" checked aria-label="Text004"></td><td><svg class="i"><use href="#textA"/></svg></td><td>Text004</td><td>0,000000</td></tr>
              <tr><td><input type="checkbox" checked aria-label="Text003"></td><td><svg class="i"><use href="#textA"/></svg></td><td>Text003</td><td>1,000000</td></tr>
              <tr class="sel"><td><input type="checkbox" checked aria-label="Text002"></td><td><svg class="i"><use href="#textA"/></svg></td><td>Text002</td><td>2,000000</td></tr>
              <tr><td><input type="checkbox" checked aria-label="Text"></td><td><svg class="i"><use href="#textA"/></svg></td><td>Text</td><td>3,000000</td></tr>
            </tbody>
          </table>
        </div>
        <div class="toolbar">
          <button aria-label="Поднять"><svg class="i"><use href="#up"/></svg></button>
          <button aria-label="Опустить"><svg class="i"><use href="#down"/></svg></button>
          <span class="sep"></span>
          <button aria-label="Дублировать"><svg class="i"><use href="#dup"/></svg></button>
          <button aria-label="Сгруппировать"><svg class="i"><use href="#gfolder"/></svg></button>
          <button aria-label="Разгруппировать"><svg class="i"><use href="#gopen"/></svg></button>
          <button aria-label="Удалить"><svg class="i"><use href="#del"/></svg></button>
          <span class="sep"></span>
          <button aria-label="Вырезать"><svg class="i"><use href="#scissors"/></svg></button>
          <button aria-label="Копировать"><svg class="i"><use href="#copy"/></svg></button>
          <button aria-label="Вставить"><svg class="i"><use href="#paste"/></svg></button>
        </div>
      </section>
    </aside>
  </main>
</div>
<script src="script.js"></script>
</body>
</html>
```

FILE: styles.css
```css
* { box-sizing: border-box; }

body {
  margin: 0;
  background: #0b6b3a;
  color: #2e3436;
  font: 11px/13px "DejaVu Sans Condensed", "Noto Sans", sans-serif;
}

button, input, select {
  margin: 0;
  padding: 0;
  border: 0;
  background: none;
  color: inherit;
  font: inherit;
}

button {
  display: flex;
  align-items: center;
  justify-content: center;
  white-space: nowrap;
}

.sprite { position: absolute; width: 0; height: 0; }
.i { width: 16px; height: 16px; flex: none; display: block; }
.w18 { width: 18px; }
.holes { fill: #4d82c4; }

.window {
  display: flex;
  flex-direction: column;
  height: 100vh;
  min-height: 700px;
  padding: 1px 1px 0 0;
  background: #0d5a33;
}

.titlebar {
  display: flex;
  align-items: center;
  height: 37px;
  flex: none;
  padding: 0 12px;
  border-bottom: 1px solid #8e8e8c;
  border-radius: 5px 5px 0 0;
  background: linear-gradient(#f5f5f5 30px, #ededed);
  box-shadow: inset 0 -1px #dcdcdc;
}
.titlebar h1 {
  flex: 1;
  margin: 0 0 0 78px;
  text-align: center;
  font-size: 11px;
}
.winctl { display: flex; gap: 22px; }
.winctl button { width: 12px; height: 12px; }
.winctl svg { width: 10px; height: 10px; }

.menubar {
  display: flex;
  gap: 15px;
  flex: none;
  height: 24px;
  padding-left: 4px;
  background: #e8e8e7;
}

.panes { display: flex; flex: 1; min-height: 0; }
.left { display: flex; flex-direction: column; flex: 1; min-width: 0; }
.upper { display: flex; flex: 1; min-height: 0; }
.lower { display: flex; flex: 0 0 160px; min-height: 0; border-top: 3px solid #b4b4b0; }
.right {
  display: flex;
  flex-direction: column;
  flex: 0 0 323px;
  border-left: 3px solid #b6b6b1;
  border-right: 1px solid #b6b6b1;
}

.panel {
  display: flex;
  flex-direction: column;
  min-width: 0;
  min-height: 0;
  padding-bottom: 7px;
  background: #e8e8e7;
}
.upper .panel, .browser { border-top: 1px solid #b6b6b1; }

.tabs {
  display: flex;
  gap: 8px;
  flex: none;
  height: 37px;
  padding-left: 8px;
  border-bottom: 1px solid #b6b6b1;
  background: #cfcfcd;
}
.tabs.near { padding-left: 6px; }
.tab { width: 54px; height: 36px; flex: none; border-bottom: 3px solid transparent; border-top: 3px solid transparent; }
.tab.on { border-bottom-color: #4a90d9; }
.tabs.tall { height: 43px; }
.tab.doc { width: 165px; height: 43px; gap: 12px; padding-right: 4px; font-weight: bold; }
.x { width: 12px; height: 12px; }
.cross { width: 60px; height: 30px; margin: 1px 1px 0 auto; flex: none; }
.tabs.scrolled .tab { width: 64px; }
.tabs.scrolled .holes { fill: #888; }
.nudge { width: 8px; }
.nudge svg { width: 6px; height: 10px; }

/* toolbox */
.toolbox { flex: 0 0 135px; border-right: 3px solid #b6b6b1; }
.tools {
  display: grid;
  grid-template-columns: repeat(4, 32px);
  grid-auto-rows: 28px;
  align-content: start;
  flex: none;
  height: 190px;
  padding-top: 2px;
  border-bottom: 1px solid #b6b6b1;
  background: #fff;
}
.tools .on, .toolbar .on, .timerow .on {
  border: 1px solid #b6b6b3;
  border-radius: 3px;
  background: #d8d8d7;
}
.defaults { display: flex; gap: 11px; flex: 1; padding-left: 3px; background: #fff; }
.inks { width: 56px; }
.swatches { position: relative; height: 63px; }
.swatch { position: absolute; width: 30px; height: 26px; border: 1px solid #000; border-right-width: 2px; border-bottom-width: 2px; background: #fff; }
.fore { left: 1px; top: 5px; background: #000; box-shadow: inset 0 0 0 1px #fff; }
.back { left: 26px; top: 28px; }
.swap { position: absolute; left: 39px; top: 11px; }
.reset { position: absolute; left: 7px; top: 39px; }
.swap svg, .reset svg { width: 8px; height: 8px; display: block; }
.gradient {
  width: 56px;
  height: 24px;
  border: 1px solid #000;
  background: linear-gradient(90deg, #fff, #000) content-box;
  padding: 1px;
}
.pensize { width: 56px; height: 48px; border: 1px solid #000; border-right-width: 2px; border-bottom-width: 2px; }
.pensize span { width: 20px; height: 20px; border-radius: 50%; background: #000; }
.steps { display: flex; height: 20px; }
.steps button { flex: 1; color: #1f2a44; }
.points { height: 22px; padding-left: 3px; color: #000; }

/* canvas window */
.canvaspanel { flex: 1; }
.barrow { display: flex; flex: none; background: #fff; }
.toolbar { display: flex; align-items: center; gap: 1px; height: 36px; flex: 1; min-width: 0; padding-left: 4px; background: #e8e8e7; }
.toolbar button { width: 28px; height: 28px; flex: none; }
.toolbar .wide { width: 103px; }
.sep { width: 1px; height: 28px; margin: 0 6px; background: #cdcdcb; }
.stop { width: 18px; }

.stage {
  display: grid;
  grid-template: 23px minmax(0, 1fr) / 19px minmax(0, 1fr) 13px;
  flex: 1;
  min-height: 0;
  background: #fff;
  border-bottom: 1px solid #b6b6b3;
}
.corner { align-items: flex-end; padding-bottom: 2px; }
.corner svg { width: 10px; height: 14px; }
.hruler { grid-column: 2 / 4; width: 100%; height: 23px; border-bottom: 1px solid #b6b6b3; }
.vruler { width: 19px; height: 100%; border-right: 1px solid #b6b6b3; overflow: visible; }
.hruler path, .vruler path { stroke: #b6b6b3; fill: none; shape-rendering: crispEdges; }
.hruler text, .vruler text { fill: #858585; font-size: 11px; }
.work {
  display: flex;
  align-items: center;
  justify-content: center;
  min-width: 0;
  overflow: hidden;
  padding: 0 2px 2px 0;
}
.artboard {
  position: relative;
  flex: none;
  width: 481px;
  height: 271px;
  border: 1px solid #000;
  background: conic-gradient(#e1e1e1 25%, #a5a5a5 0 50%, #e1e1e1 0 75%, #a5a5a5 0) 8px 4px / 30px 30px;
}
.art { position: absolute; font: 21px/28px "Noto Sans", sans-serif; }
.art.white { left: 139px; top: 65px; color: #fff; }
.art.green { left: 53px; top: 118px; color: #44e666; }
.handle { position: absolute; width: 10px; height: 10px; border: 1px solid #222; border-radius: 50%; }
.size { left: 64px; top: 112px; background: #b05800; }
.origin { left: 49px; top: 127px; background: #00a000; }

.vscroll, .hscroll { display: flex; align-items: center; justify-content: center; background: #c4c6c5; }
.vscroll span { width: 6px; height: 40px; border-radius: 3px; background: #7b7e7d; }
.hscroll span { width: 40px; height: 6px; border-radius: 3px; background: #7b7e7d; }

.zoomrow, .timerow { display: flex; align-items: center; flex: none; height: 28px; background: #fff; }
.zoomrow > button, .timerow > button { width: 28px; height: 28px; flex: none; }
.boxed .i {
  border: 1px solid #8e908d;
  border-radius: 4px;
  background: linear-gradient(#fff, #e4e4e4);
}
.zoomrow input, .timerow input {
  width: 54px;
  height: 28px;
  flex: none;
  padding-left: 8px;
  border: 1px solid #b6b6b3;
  border-radius: 3px;
  background: #fff;
  color: #000;
}
.timerow .red { color: #f00; }
.zoomrow .hscroll { flex: 1; align-self: stretch; margin-right: 12px; }
.status { flex: 1; padding-left: 13px; white-space: nowrap; }
.combo {
  display: flex;
  align-items: center;
  width: 160px;
  height: 28px;
  padding: 0 8px 0 5px;
  border: 1px solid #b6b6b3;
  border-bottom-color: #8f918e;
  border-radius: 3px;
  background: linear-gradient(#f2f2f1, #dcdcdb);
}
.combo select { flex: 1; padding-left: 2px; appearance: none; }
.caret { width: 10px; height: 6px; }
.timerow .animate { margin-left: 4px; }

/* parameters */
.params { flex: 0 0 321px; border-right: 3px solid #b6b6b1; }
.scrollclip { position: relative; flex: 1; min-height: 0; overflow: hidden; background: #fff; }
.scrollclip::after {
  content: "";
  position: absolute;
  inset: 28px 1px 1px -1px;
  border: 1px dashed #c8c8c7;
  pointer-events: none;
}
.ptable { width: 100%; border-collapse: collapse; table-layout: fixed; color: #000; }
.c1 { width: 99px; }
.c2 { width: 150px; }
.c3 { width: 26px; }
th { padding: 0 5px; text-align: left; color: #909292; white-space: nowrap; border-right: 1px solid #e0e0df; border-bottom: 1px solid #e0e0df; }
th:last-child { border-right: 0; }
.ptable th { height: 27px; }
.ptable th:first-child, .ptable td:first-child { padding-left: 0; }
.ptable td { height: 19px; padding: 0 4px; white-space: nowrap; }
.colorcell { width: 147px; height: 17px; margin-left: -2px; border: 2px solid #000; }

/* timetrack */
.timetrack { flex: 1; }
.trackgrid { display: grid; grid-template: minmax(0, 1fr) 12px / minmax(0, 1fr) 12px; flex: 1; background: #fff; }
.trackarea { display: flex; flex-direction: column; padding: 0 4px 0 2px; }
.timeline { width: 100%; height: 27px; flex: none; background: linear-gradient(#728cb5 10px, #808080 10px); }
.timeline text { fill: #2b2b2b; font-size: 12px; }
.timeline .tick { stroke: #222; fill: none; shape-rendering: crispEdges; }
.track { flex: 1; margin: 1px 0; border: 1px dashed #c8c8c7; border-left-color: #000; border-right: 0; }
.trackgrid .vscroll { align-items: flex-start; padding-top: 17px; }
.full { padding: 0 3px; }
.full span { width: 100%; }

/* right dock */
.browser { flex: 0 0 176px; }
.tree { flex: 1; margin: 0; padding: 1px 0 0; border: 1px solid #b6b6b1; border-top: 0; background: #fff; list-style: none; }
.tree li { display: flex; align-items: center; gap: 1px; height: 19px; padding-left: 20px; background: #4a90d9; color: #fff; }
.options { flex: 0 0 222px; border-top: 3px solid #b4b4b0; }
.hints { flex: 1; padding-top: 1px; background: #fff; }
.hints p { margin: 0; }
.hints .mid { text-align: center; }
.layers { flex: 1; padding-bottom: 0; border-top: 3px solid #b4b4b0; }
.layerlist { flex: 1; background: #fff; }
.layers .toolbar { flex: none; }
.ltable { width: 100%; border-collapse: collapse; table-layout: fixed; color: #000; }
.l1 { width: 23px; }
.l2 { width: 54px; }
.l3 { width: 84px; }
.ltable th { height: 27px; }
.ltable td { height: 22px; padding: 0 4px; }
.ltable td .i { margin-left: 28px; }
.ltable .sel { background: #4a90d9; color: #fff; }
.ltable input {
  display: block;
  width: 16px;
  height: 16px;
  appearance: none;
  border: 1px solid #8e908d;
  border-radius: 3px;
  background: linear-gradient(#fff, #e8e8e7);
}
.ltable input:checked::before {
  content: "";
  display: block;
  width: 14px;
  height: 14px;
  background: #111;
  clip-path: polygon(8% 48%, 24% 34%, 42% 54%, 86% 10%, 96% 30%, 44% 86%);
}
```

FILE: script.js
```js
const NS = "http://www.w3.org/2000/svg";

function add(svg, name, attrs, text) {
  const el = document.createElementNS(NS, name);
  for (const key in attrs) el.setAttribute(key, attrs[key]);
  if (text !== undefined) el.textContent = text;
  svg.appendChild(el);
}

/* Canvas rulers: a short tick each 5 units, a labelled one each 50. */
const UNIT = 1.0035;

function drawRulers() {
  const h = document.getElementById("hruler");
  const v = document.getElementById("vruler");
  const width = h.clientWidth;
  const height = v.clientHeight;
  let hd = "";
  let vd = "";
  h.replaceChildren();
  v.replaceChildren();
  for (let u = -1000; u <= 1000; u += 5) {
    const len = u % 10 === 0 ? 5 : 3;
    const x = Math.floor(396 + u * UNIT) + 0.5;
    const y = Math.floor(220 - u * UNIT) + 0.5;
    if (x > 0 && x < width - 12) {
      hd += `M${x} ${u % 50 ? 22 - len : 4}V22`;
      if (u % 50 === 0 && x < width - 26) add(h, "text", { x: x + 4, y: 15 }, u);
    }
    if (y > 0 && y < height) {
      vd += `M${u % 50 ? 18 - len : 0} ${y}H18`;
      if (u % 50 === 0) add(v, "text", { transform: `translate(11 ${y - 1}) rotate(-90)` }, u);
    }
  }
  hd += `M534.5 4V22`;
  add(h, "path", { d: hd });
  add(v, "path", { d: vd });
}

/* Time ruler: a tick each 6 frames, a labelled one each 48. */
function drawTimeline() {
  const t = document.getElementById("timeline");
  const width = t.clientWidth;
  let d = "";
  t.replaceChildren();
  for (let f = 0; f * 5.19 < width - 4; f += 6) {
    const x = Math.floor(f * 5.19) + 0.5;
    d += `M${x} 10V${f % 48 ? 14 : 22}`;
    if (f % 48 === 0) add(t, "text", { x: x + 2, y: 23 }, f + "f");
  }
  add(t, "path", { d, class: "tick" });
  add(t, "path", { d: "M0.500 10V27", stroke: "#e9a51c" });
  add(t, "path", { d: "M0 2H6L0 8Z" });
}

function draw() {
  drawRulers();
  drawTimeline();
}

draw();
addEventListener("resize", draw);
```
